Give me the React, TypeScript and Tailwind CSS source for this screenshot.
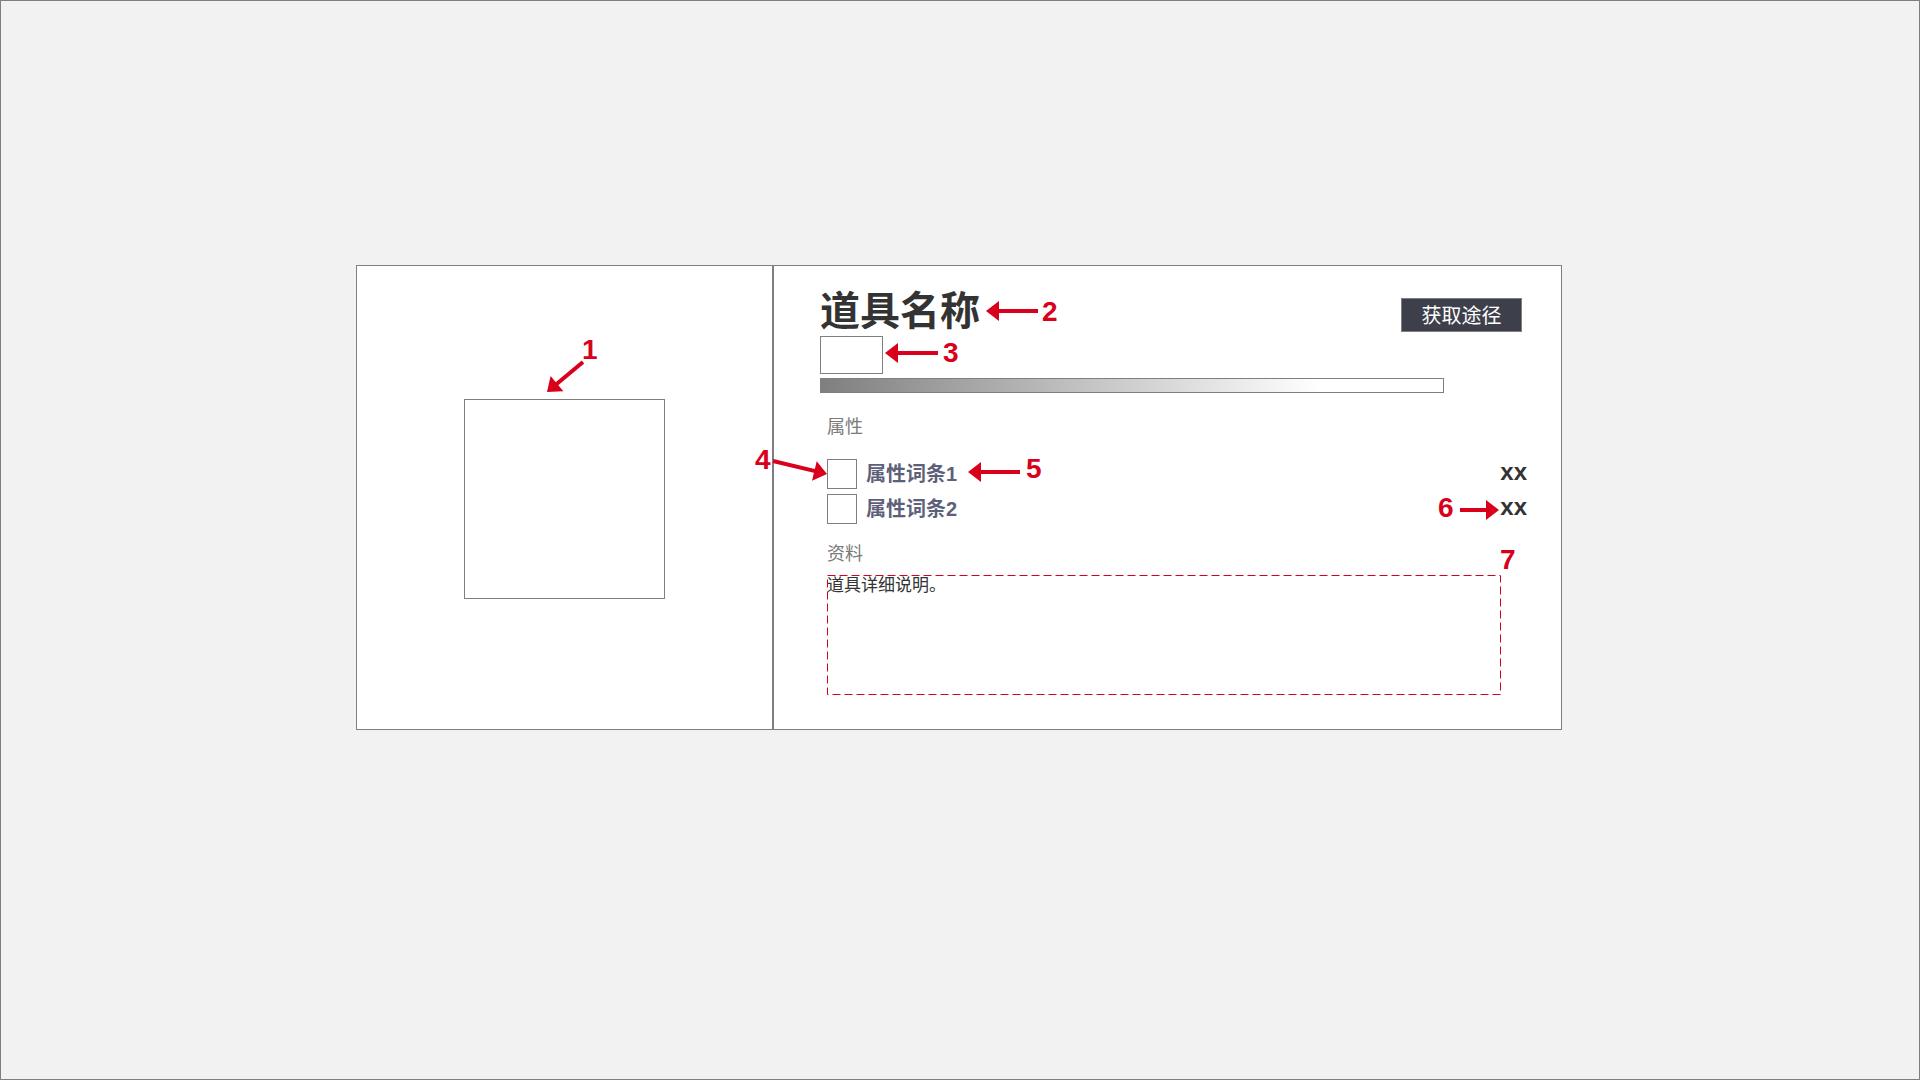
import React from "react";

const RED = "#d9001b";

type ArrowProps = { x1: number; y1: number; x2: number; y2: number };

// Callout arrow: a thick shaft ending in a filled triangular head at (x2, y2).
function Arrow({ x1, y1, x2, y2 }: ArrowProps) {
  const dx = x2 - x1;
  const dy = y2 - y1;
  const len = Math.hypot(dx, dy);
  const ux = dx / len;
  const uy = dy / len;
  const headLen = 13;
  const headHalf = 10;
  const bx = x2 - ux * headLen;
  const by = y2 - uy * headLen;
  const px = -uy;
  const py = ux;
  return (
    <g>
      <line x1={x1} y1={y1} x2={bx + ux * 2} y2={by + uy * 2} stroke={RED} strokeWidth={4} />
      <polygon
        points={`${x2},${y2} ${bx + px * headHalf},${by + py * headHalf} ${bx - px * headHalf},${by - py * headHalf}`}
        fill={RED}
      />
    </g>
  );
}

const callouts = [
  { n: "1", left: 582, top: 336 },
  { n: "2", left: 1042, top: 298 },
  { n: "3", left: 943, top: 339 },
  { n: "4", left: 755, top: 446 },
  { n: "5", left: 1026, top: 455 },
  { n: "6", left: 1438, top: 494 },
  { n: "7", left: 1500, top: 546 },
];

const attrs = [
  { name: "属性词条1", value: "xx" },
  { name: "属性词条2", value: "xx" },
];

export default function App() {
  return (
    <div className="relative w-[1920px] h-[1080px] border border-[#7f7f7f] bg-[#f2f2f2] overflow-hidden">
      <div className="pl-[355px] pt-[264px]">
        {/* item card */}
        <div className="flex w-[1206px] h-[465px] border border-[#7f7f7f] bg-white">
          {/* icon panel */}
          <div className="w-[415px] flex items-center justify-center">
            <div className="mt-[3px] w-[201px] h-[200px] border border-[#7f7f7f] bg-white" />
          </div>
          <div className="w-[2px] bg-[#7f7f7f]" />

          {/* detail panel */}
          <div className="flex-1 pl-[46px] pr-[34px] pt-[22px] flex flex-col">
            <div className="flex items-start justify-between">
              <div className="flex flex-col">
                <h1 className="text-[40px] leading-[40px] font-bold text-[#333333] font-['Noto_Sans_CJK_SC',sans-serif]">
                  道具名称
                </h1>
                <div className="mt-[8px] w-[63px] h-[38px] border border-[#7f7f7f]" />
              </div>
              <button className="mt-[10px] mr-[5px] w-[121px] h-[34px] border border-[#7f7f7f] bg-[#3d3f4b] text-white text-[20px] leading-none font-['Noto_Sans_CJK_SC',sans-serif] flex items-center justify-center">
                获取途径
              </button>
            </div>
            <div className="mt-[4px] w-[624px] h-[15px] border border-[#7f7f7f] bg-[linear-gradient(to_right,#7f7f7f,#ffffff_80%)]" />

            <div className="ml-[7px] flex flex-col">
              <div className="mt-[23px] text-[18px] leading-[18px] text-[#7a7a7a] font-['Noto_Sans_CJK_SC',sans-serif]">
                属性
              </div>
              <div className="mt-[25px] flex flex-col gap-[5px]">
                {attrs.map((a) => (
                  <div key={a.name} className="flex items-center justify-between">
                    <div className="flex items-center">
                      <div className="w-[30px] h-[30px] border border-[#7f7f7f] bg-white" />
                      <span className="ml-[9px] text-[20px] leading-none font-bold text-[#5d6079] font-['Liberation_Sans','Noto_Sans_CJK_SC',sans-serif]">
                        {a.name}
                      </span>
                    </div>
                    <span className="-mt-[4px] text-[24px] leading-none font-bold text-[#333333] font-['Liberation_Sans',sans-serif]">
                      {a.value}
                    </span>
                  </div>
                ))}
              </div>

              <div className="mt-[19px] text-[18px] leading-[18px] text-[#7a7a7a] font-['Noto_Sans_CJK_SC',sans-serif]">
                资料
              </div>
              <div className="relative mt-[14px] w-[674px] h-[120px]">
                <svg className="absolute inset-0" width={674} height={120}>
                  <rect
                    x={0.5}
                    y={0.5}
                    width={673}
                    height={119}
                    fill="none"
                    stroke={RED}
                    strokeWidth={1}
                    strokeDasharray="8 4"
                  />
                </svg>
                <p className="relative text-[17px] leading-[17px] text-[#333333] font-['Noto_Sans_CJK_SC',sans-serif]">
                  道具详细说明。
                </p>
              </div>
            </div>
          </div>
        </div>
      </div>

      {/* numbered callouts */}
      <svg className="absolute -left-px -top-px pointer-events-none" width={1920} height={1080}>
        <Arrow x1={583} y1={362} x2={547} y2={392} />
        <Arrow x1={1038} y1={311} x2={986} y2={311} />
        <Arrow x1={938} y1={353} x2={885} y2={353} />
        <Arrow x1={773} y1={461} x2={827} y2={474} />
        <Arrow x1={1020} y1={472} x2={968} y2={472} />
        <Arrow x1={1460} y1={510} x2={1499} y2={510} />
      </svg>
      <div className="absolute -left-px -top-px w-[1920px] h-[1080px] pointer-events-none">
        {callouts.map((c) => (
          <span
            key={c.n}
            className="absolute text-[28px] leading-[28px] font-bold text-[#d9001b] font-['Liberation_Sans',sans-serif]"
            style={{ left: c.left, top: c.top }}
          >
            {c.n}
          </span>
        ))}
      </div>
    </div>
  );
}
